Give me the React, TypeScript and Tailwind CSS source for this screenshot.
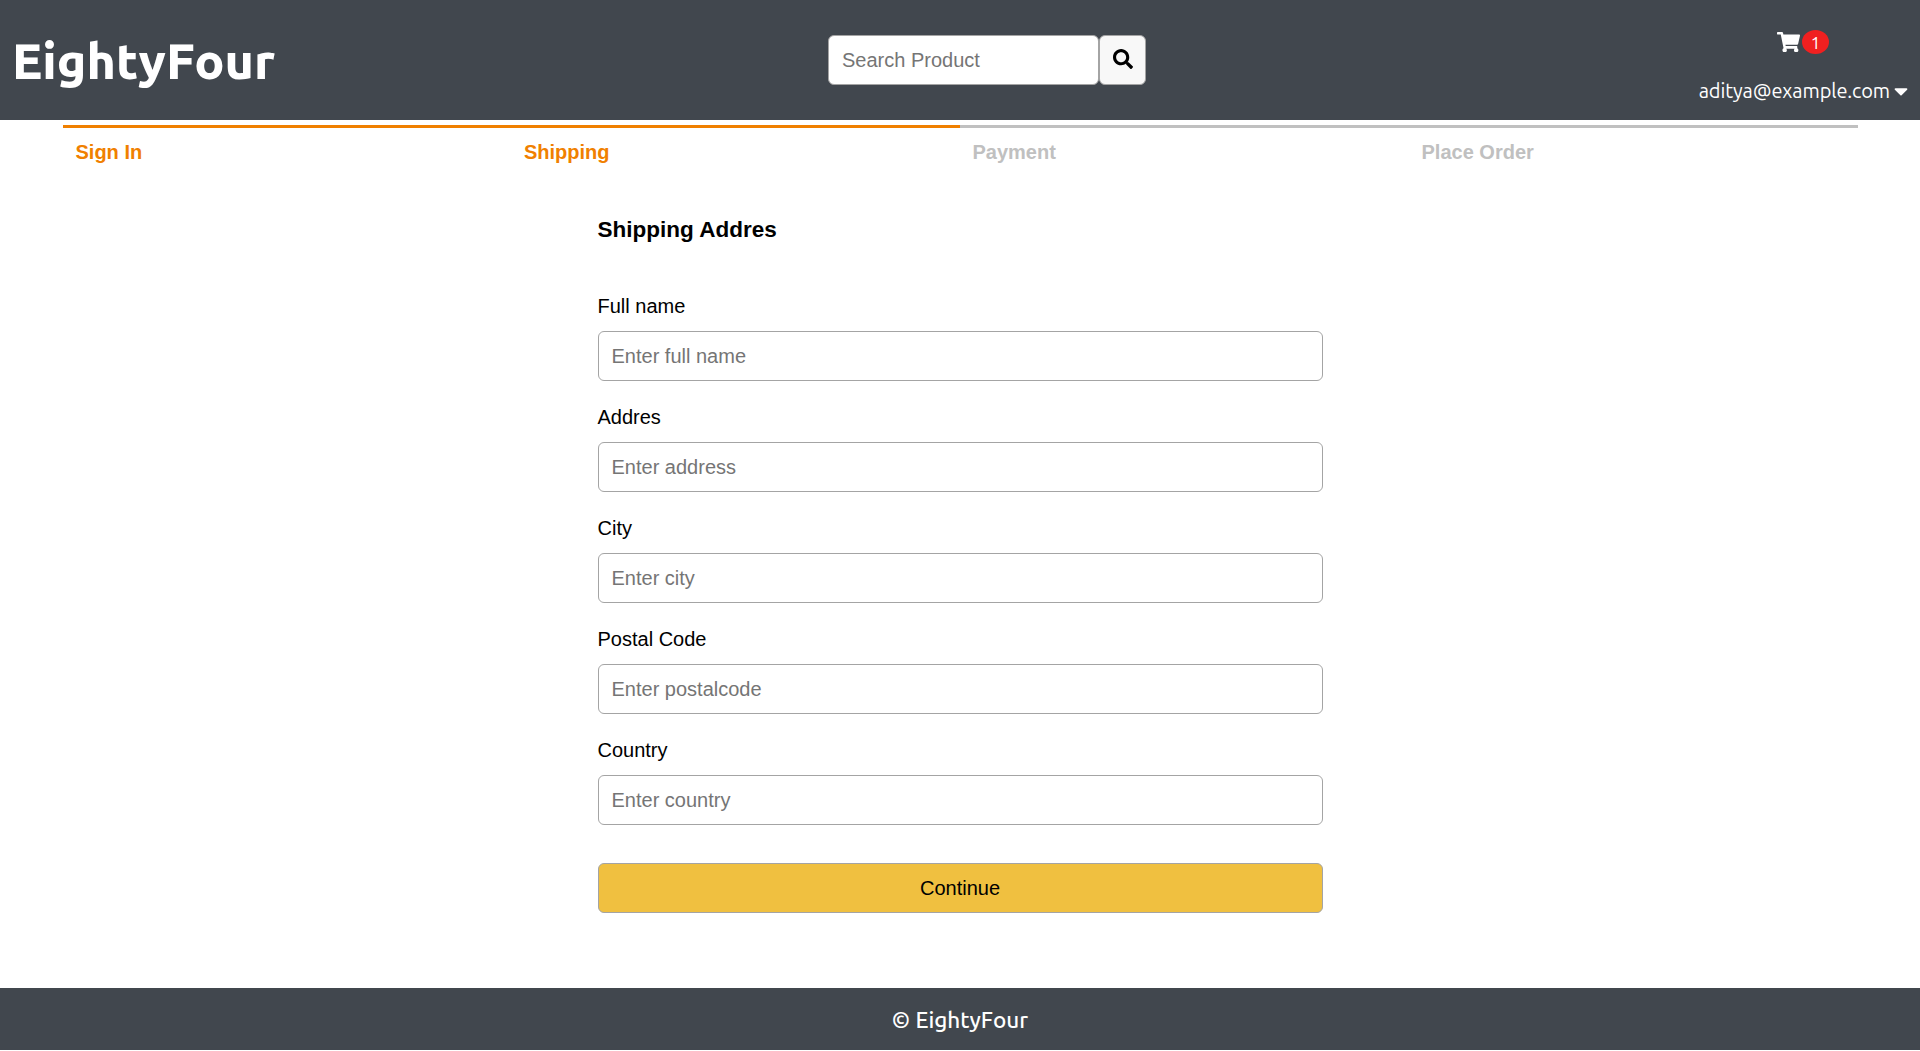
import { FaCaretDown, FaSearch, FaShoppingCart } from "react-icons/fa";

const steps = [
  { label: "Sign In", active: true },
  { label: "Shipping", active: true },
  { label: "Payment", active: false },
  { label: "Place Order", active: false },
];

const fields = [
  { id: "fullName", label: "Full name", placeholder: "Enter full name" },
  { id: "address", label: "Addres", placeholder: "Enter address" },
  { id: "city", label: "City", placeholder: "Enter city" },
  { id: "postalCode", label: "Postal Code", placeholder: "Enter postalcode" },
  { id: "country", label: "Country", placeholder: "Enter country" },
];

function Header() {
  return (
    <header className="flex h-[120px] items-stretch justify-between bg-[#41474e] font-[Ubuntu,'Noto_Sans',sans-serif] text-white">
      <a className="flex w-[828px] pt-[26px] pl-[12px] text-[50px] leading-[68px] font-extrabold">
        <span>EightyFour</span>
      </a>
      <form className="mt-[35px] flex h-[50px] w-[318px] self-start font-['Liberation_Sans',Arial,sans-serif]">
        <input
          type="text"
          placeholder="Search Product"
          className="h-[50px] w-[271px] rounded-[6px] border border-[#a4a4a4] bg-white px-[13px] text-[20px] text-black placeholder:text-[#757575]"
        />
        <button
          type="button"
          className="flex h-[50px] w-[47px] items-center justify-center rounded-[6px] border border-[#a4a4a4] bg-[#f8f8f8] pb-[2px] text-black"
        >
          <FaSearch size={20} />
        </button>
      </form>
      <div className="flex flex-1 flex-col items-end pr-[12px]">
        <div className="mt-[30px] mr-[79px] flex h-6 items-center gap-[2px]">
          <FaShoppingCart className="h-[20.5px] w-[23px]" />
          <span className="flex h-6 w-[27px] items-center justify-center rounded-[50%] bg-[#f02020] text-[17px] leading-none">
            1
          </span>
        </div>
        <div className="mt-[23px] flex items-center gap-[4px] text-[20px] leading-[27px]">
          <span className="tracking-[-0.1px]">aditya@example.com</span>
          <FaCaretDown size={22} className="w-[14px]" />
        </div>
      </div>
    </header>
  );
}

function CheckoutSteps() {
  return (
    <div className="mt-[5px] mr-[62px] ml-[63px] grid grid-cols-[448.5px_448.5px_449px_449px] text-[20px] leading-[23px] font-bold">
      {steps.map((step) => (
        <div
          key={step.label}
          className={
            step.active
              ? "border-t-[3px] border-[#f08000] pt-[13px] pl-[12.5px] text-[#f08000]"
              : "border-t-[3px] border-[#c0c0c0] pt-[13px] pl-[12.5px] text-[#c0c0c0]"
          }
        >
          {step.label}
        </div>
      ))}
    </div>
  );
}

function ShippingForm() {
  return (
    <form className="mt-[53px] ml-[597.5px] flex w-[725px] flex-col">
      <h1 className="mb-[52px] text-[22.5px] leading-[26px] font-bold">Shipping Addres</h1>
      {fields.map((field) => (
        <div key={field.id} className="mb-[25px] flex flex-col">
          <label htmlFor={field.id} className="mb-[13px] text-[20px] leading-[23px]">
            {field.label}
          </label>
          <input
            id={field.id}
            type="text"
            placeholder={field.placeholder}
            className="h-[50px] rounded-[6px] border border-[#a4a4a4] px-[13px] text-[20px] placeholder:text-[#757575]"
          />
        </div>
      ))}
      <button
        type="button"
        className="mt-[13px] h-[50px] rounded-[6px] border border-[#a4a4a4] bg-[#f0c040] text-[20px]"
      >
        Continue
      </button>
    </form>
  );
}

export default function App() {
  return (
    <div className="flex h-[1051px] flex-col bg-white font-['Liberation_Sans',Arial,sans-serif] text-black">
      <Header />
      <main className="flex-1">
        <CheckoutSteps />
        <ShippingForm />
      </main>
      <footer className="mb-px flex h-[62px] items-center justify-center bg-[#41474e] pt-[2px] font-[Ubuntu,'Noto_Sans',sans-serif] text-[22.5px] font-medium text-white">
        <span>© EightyFour</span>
      </footer>
    </div>
  );
}
